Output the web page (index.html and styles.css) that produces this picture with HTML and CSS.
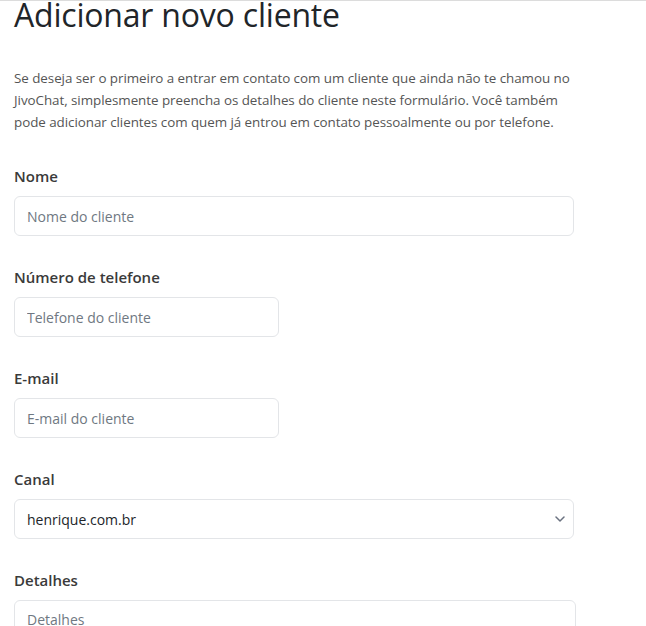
FILE: index.html
```html
<!DOCTYPE html>
<html lang="pt-BR">
<head>
  <meta charset="UTF-8" />
  <meta name="viewport" content="width=device-width, initial-scale=1" />
  <title>Adicionar novo cliente</title>
  <link rel="stylesheet" href="styles.css">
</head>
<body>

  <div class="page">
    <h1 class="page-title">Adicionar novo cliente</h1>

    <p class="intro">Se deseja ser o primeiro a entrar em contato com um cliente que ainda não te chamou no JivoChat, simplesmente preencha os detalhes do cliente neste formulário. Você também pode adicionar clientes com quem já entrou em contato pessoalmente ou por telefone.</p>

    <form class="client-form">
      <div class="field">
        <label for="client-name">Nome</label>
        <input type="text" id="client-name" placeholder="Nome do cliente" />
      </div>

      <div class="field">
        <label for="client-phone">Número de telefone</label>
        <input type="tel" id="client-phone" class="short" placeholder="Telefone do cliente" />
      </div>

      <div class="field">
        <label for="client-email">E-mail</label>
        <input type="email" id="client-email" class="short" placeholder="E-mail do cliente" />
      </div>

      <div class="field">
        <label for="client-channel">Canal</label>
        <div class="select-wrap">
          <select id="client-channel">
            <option>henrique.com.br</option>
          </select>
          <svg class="chevron" width="10" height="6" viewBox="0 0 10 6">
            <path d="M1 1l4 4 4-4" fill="none" stroke="#6b7280" stroke-width="1.5" stroke-linecap="round" stroke-linejoin="round"/>
          </svg>
        </div>
      </div>

      <div class="field">
        <label for="client-details">Detalhes</label>
        <textarea id="client-details" placeholder="Detalhes"></textarea>
      </div>
    </form>
  </div>

</body>
</html>
```

FILE: styles.css
```css
/* Base */
body {
  margin: 0;
  font-family: 'Open Sans', 'Noto Sans', sans-serif;
  background: #fff;
  color: #212529;
  border-top: 1px solid #dcdcdc;
  overflow: hidden;
}
.page {
  padding: 0 14px;
  width: 560px;
}
/* Title */
.page-title {
  margin: 0;
  font-size: 32px;
  font-weight: 500;
  line-height: 28px;
  letter-spacing: -0.2px;
  color: #212529;
}
/* Intro text */
.intro {
  margin: 38px 0 33px;
  font-size: 13.4px;
  line-height: 22px;
  color: #555;
  letter-spacing: -0.05px;
}
/* Form fields */
.field {
  margin-bottom: 31px;
}
.field label {
  display: block;
  margin-bottom: 10px;
  font-size: 15px;
  font-weight: 600;
  line-height: 20px;
  color: #3a3a3a;
}
input, select, textarea {
  box-sizing: border-box;
  width: 560px;
  height: 40px;
  padding: 0 12px;
  border: 1px solid #e3e5e8;
  border-radius: 6px;
  background: #fff;
  font-family: inherit;
  font-size: 14px;
  color: #212529;
  outline: none;
}
input.short {
  width: 265px;
}
input::placeholder, textarea::placeholder {
  color: #6f7882;
}
.select-wrap {
  position: relative;
  width: 560px;
}
select {
  appearance: none;
  -webkit-appearance: none;
}
.chevron {
  position: absolute;
  right: 9px;
  top: 17px;
}
textarea {
  width: 562px;
  height: 80px;
  padding-top: 9px;
  resize: none;
}
```
